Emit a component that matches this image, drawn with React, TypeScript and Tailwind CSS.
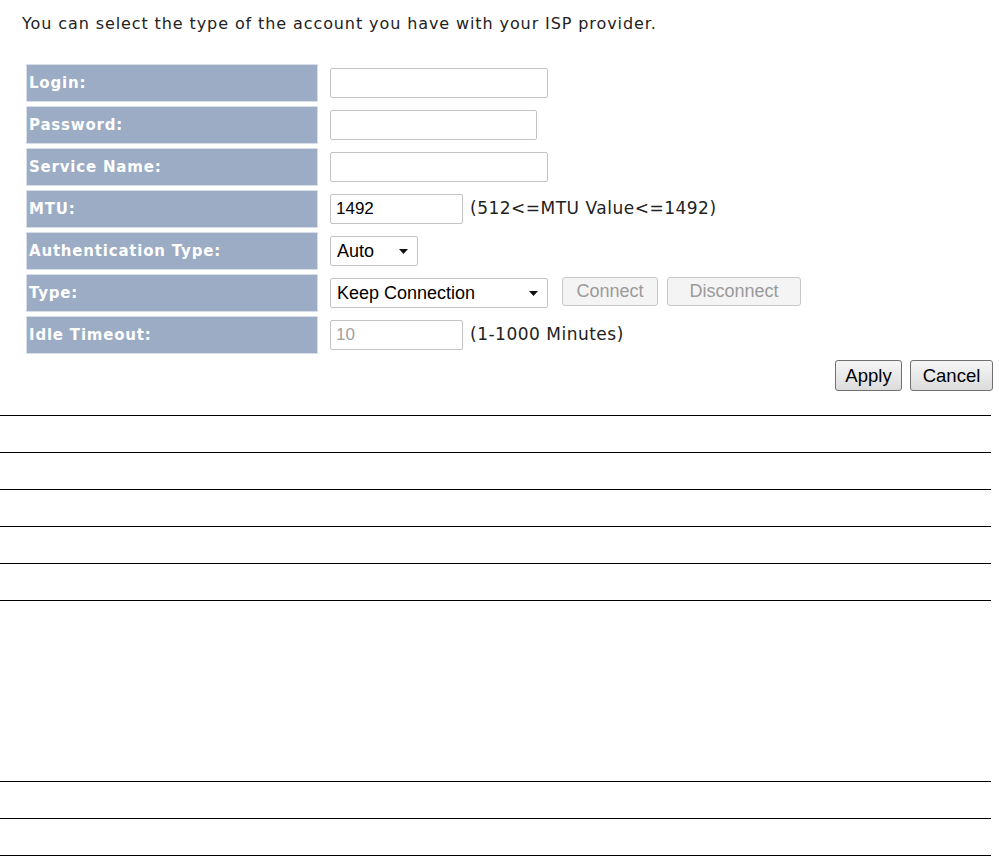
import { useState } from "react";

const labelCls =
  "w-[290px] h-[36px] bg-[#9bacc4] text-white font-bold text-[15px] tracking-[0.8px] pl-[2px] flex items-center outline outline-1 outline-[#d9dfe8]";
const inputCls =
  "h-[30px] border border-[#c4c4c4] rounded-[2px] bg-white px-[6px] outline-none font-['Liberation_Sans',Arial,sans-serif]";
const hintCls = "text-[17px] tracking-[0.5px] text-[#222] ml-[-1px]";

const Arrow = () => (
  <svg width="9" height="5" viewBox="0 0 9 5" className="ml-auto">
    <path d="M0 0h9L4.5 5z" fill="#111" />
  </svg>
);

const Row = ({ label, children }: { label: string; children?: React.ReactNode }) => (
  <div className="flex items-center gap-[13px]">
    <div className={labelCls}>{label}</div>
    <div className="flex items-center gap-[8px]">{children}</div>
  </div>
);

const App = () => {
  const [mtu, setMtu] = useState("1492");

  return (
    <div className="w-[999px] h-[856px] bg-white font-['DejaVu_Sans',Verdana,sans-serif] text-[#222] overflow-hidden">
      <p className="pl-[22px] pt-[13px] text-[16px] tracking-[0.9px] leading-[22px]">
        You can select the type of the account you have with your ISP provider.
      </p>

      <div className="pl-[27px] pt-[30px] flex flex-col gap-[6px]">
        <Row label="Login:">
          <input className={`${inputCls} w-[218px] text-[17px] text-black`} />
        </Row>
        <Row label="Password:">
          <input type="password" className={`${inputCls} w-[207px] text-[17px] text-black`} />
        </Row>
        <Row label="Service Name:">
          <input className={`${inputCls} w-[218px] text-[17px] text-black`} />
        </Row>
        <Row label="MTU:">
          <input
            value={mtu}
            onChange={(e) => setMtu(e.target.value)}
            className={`${inputCls} w-[133px] text-[17px] text-black pl-[5px]`}
          />
          <span className={hintCls}>(512&lt;=MTU Value&lt;=1492)</span>
        </Row>
        <Row label="Authentication Type:">
          <div className={`${inputCls} w-[88px] flex items-center text-[18px] text-black pr-[9px]`}>
            Auto
            <Arrow />
          </div>
        </Row>
        <Row label="Type:">
          <div className={`${inputCls} w-[218px] flex items-center text-[18px] text-black pr-[9px]`}>
            Keep Connection
            <Arrow />
          </div>
          <button className="ml-[6px] h-[29px] w-[96px] rounded-[3px] border border-[#c8c8c8] bg-[#f4f4f4] text-[#9a9a9a] text-[18px] font-['Liberation_Sans',Arial,sans-serif] -translate-y-[2px]">
            Connect
          </button>
          <button className="ml-[1px] h-[29px] w-[134px] rounded-[3px] border border-[#c8c8c8] bg-[#f4f4f4] text-[#9a9a9a] text-[18px] font-['Liberation_Sans',Arial,sans-serif] -translate-y-[2px]">
            Disconnect
          </button>
        </Row>
        <Row label="Idle Timeout:">
          <input
            disabled
            value="10"
            className={`${inputCls} w-[133px] text-[17px] text-[#a0a0a0] border-[#b4b4b4] pl-[5px]`}
          />
          <span className={hintCls}>(1-1000 Minutes)</span>
        </Row>
      </div>

      <div className="flex justify-end gap-[8px] pr-[6px] pt-[7px]">
        <button className="h-[31px] w-[67px] rounded-[3px] border border-[#707070] bg-gradient-to-b from-[#f6f6f6] to-[#dcdcdc] text-[18.5px] text-black font-['Liberation_Sans',Arial,sans-serif]">
          Apply
        </button>
        <button className="h-[31px] w-[83px] rounded-[3px] border border-[#707070] bg-gradient-to-b from-[#f6f6f6] to-[#dcdcdc] text-[18.5px] text-black font-['Liberation_Sans',Arial,sans-serif]">
          Cancel
        </button>
      </div>

      <div className="w-[991px] pt-[24px]">
        {[0, 1, 2, 3, 4].map((i) => (
          <div key={i} className="h-[37px] border-t border-black" />
        ))}
        <div className="h-[181px] border-t border-black" />
        {[0, 1].map((i) => (
          <div key={i} className="h-[37px] border-t border-black" />
        ))}
        <div className="border-t border-black" />
      </div>
    </div>
  );
};

export default App;
